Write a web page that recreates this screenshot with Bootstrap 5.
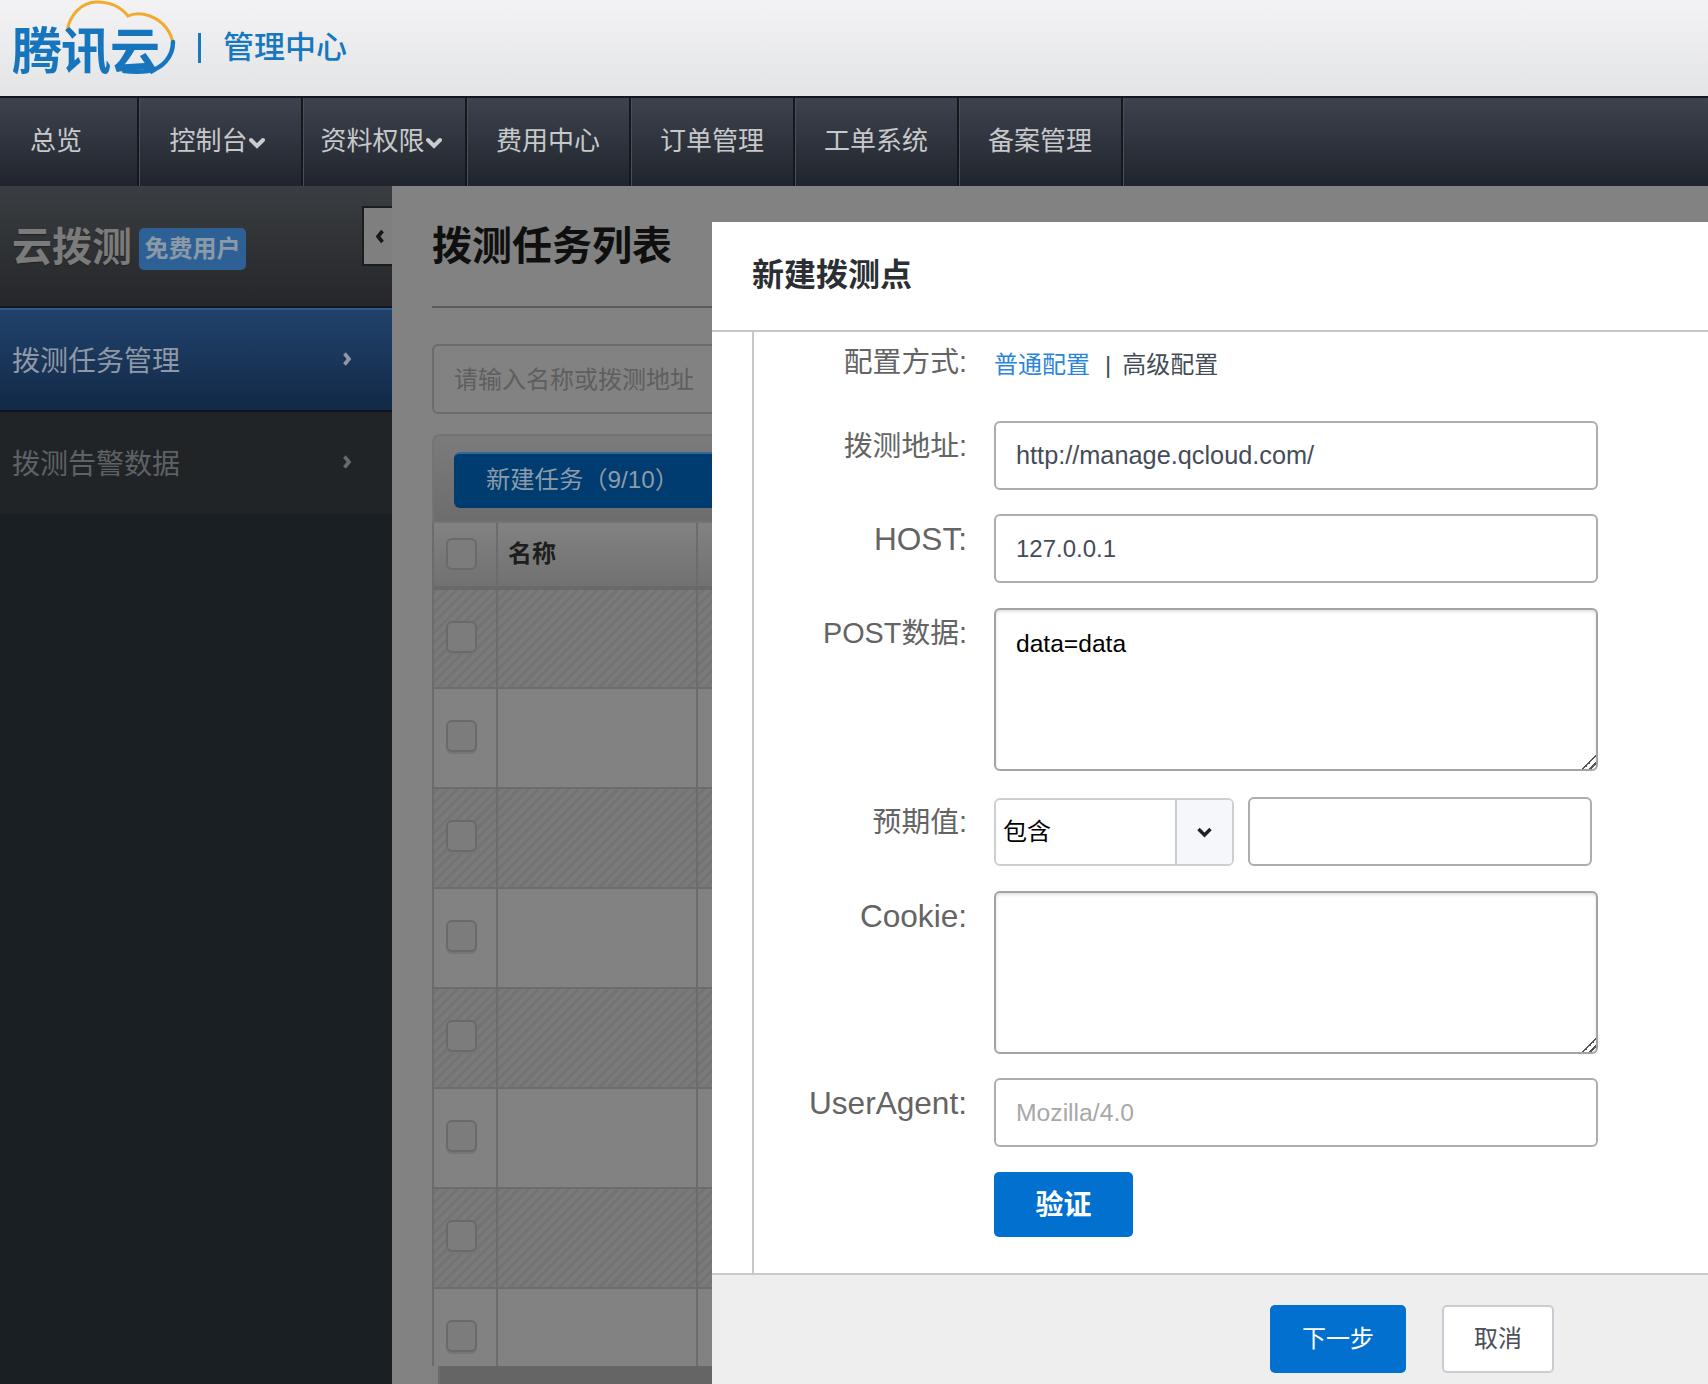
<!doctype html>
<html lang="zh-CN">
<head>
<meta charset="utf-8">
<title>云拨测</title>
<link rel="stylesheet" href="https://cdn.jsdelivr.net/npm/bootstrap@5.3.0/dist/css/bootstrap.min.css">
<style>
html,body{height:100%;overflow:hidden}
body{font-family:"Liberation Sans","Noto Sans CJK SC",sans-serif;background:#828282}
.shell{height:1384px}
.topbar{height:96px;background:linear-gradient(#f3f3f5,#e3e4e6);flex:none}
.brand-box{position:relative;width:180px;height:96px;flex:none}
.brand-box svg{position:absolute;left:0;top:0}
.brand-name{position:absolute;left:12px;top:22px;font-size:50px;line-height:60px;font-weight:700;color:#1675bc;letter-spacing:-1px;white-space:nowrap}
.brand-sep{width:3px;height:30px;background:#1a78bd;margin:0 22px 0 18px;flex:none}
.brand-sub{font-size:31px;line-height:90px;color:#1878bd;font-weight:500;white-space:nowrap}
.mainnav{height:90px;flex:none;background:linear-gradient(#3d434d,#20252d);border-top:2px solid #14171b;padding:0!important}
.mainnav .navbar-nav{height:100%}
.mainnav .nav-link{height:100%;width:164px;display:flex;align-items:center;justify-content:center;padding:0 0 2px;font-size:26px;color:#c6c8ca;border-right:2px solid #14171b;box-shadow:1px 0 0 #4a4f57;white-space:nowrap}
.mainnav .nav-item:first-child .nav-link{width:139px;justify-content:flex-start;padding-left:30px}
.nav-caret{margin:4px 6px 0 1px;flex:none}
.aside-pane{width:392px;flex:none;background:#1a1f23;position:relative}
.aside-head{height:122px;background:linear-gradient(#3a3d41,#25272a);border-bottom:2px solid #17191c;padding:0 0 0 12px}
.aside-title{font-size:40px;font-weight:700;color:#7b7b7b;text-shadow:0 1px 1px #222;line-height:50px;margin-top:2px}
.plan-tag{margin:6px 0 0 7px;width:107px;height:42px;border-radius:5px;background:#2d6195;color:#8c99a6;font-size:24px;font-weight:700;line-height:42px;text-align:center;white-space:nowrap}
.fold-tab{position:absolute;right:0;top:20px;width:30px;height:60px;background:#7f7f7f;border:2px solid #1b1e21;border-right:0;display:flex;align-items:center;justify-content:center;padding-left:3px}
.side-list{background:transparent}
.side-list .list-group-item{height:104px;border:0;border-radius:0;background:#212427;border-bottom:2px solid #1a1f23;color:#5e6165;font-size:28px;display:flex;align-items:center;justify-content:space-between;padding:4px 40px 0 12px}
.side-list .list-group-item svg{margin-top:-6px}
.side-list .list-group-item.active{background:linear-gradient(#21426c,#122947);color:#8e99a5;border-top:2px solid #2a5a8c;border-bottom:2px solid #10161c}
.work-pane{flex:1 1 auto;min-width:0;padding-left:40px;background:#828282}
.page-title{height:122px;flex:none;border-bottom:2px solid #5c5c5c;font-size:40px;font-weight:700;color:#0f0f0f;line-height:120px;white-space:nowrap}
.search-box{margin-top:36px;height:70px;flex:none;border:2px solid #6c6c6c;border-radius:6px;padding:0 20px;font-size:24px;line-height:68px;color:#5e5e5e;white-space:nowrap}
.tool-panel{margin-top:20px;height:89px;flex:none;background:linear-gradient(#7b7b7b,#6d6d6d);border:2px solid #747474;border-radius:8px 0 0 0;padding:16px 0 0 20px;border-right:0}
.new-task{width:300px;height:56px;border-radius:6px;background:#003c70;border:0;border-top:2px solid #2b6c98;color:#8c9ba8;font-size:24.300px;text-align:left;padding:0 0 2px 32px;white-space:nowrap}
.grid-wrap{flex:1 1 auto;min-height:0;overflow:hidden;border-left:2px solid #6c6c6c}
.grid-wrap .table{width:1400px;margin:0;table-layout:fixed;--bs-table-bg:transparent;border-collapse:collapse}
.grid-wrap th,.grid-wrap td{padding:0;border:0;border-right:2px solid #6c6c6c;border-bottom:2px solid #6c6c6c;background:transparent;box-shadow:none;vertical-align:middle}
.grid-wrap thead th{height:65px;background:linear-gradient(#828282,#717171);border-bottom:4px solid #696969;font-size:24px;color:#1d1d1d;font-weight:700;padding-left:10px;padding-bottom:2px}
.grid-wrap thead th:first-child{padding-left:0}
.grid-wrap tbody td{height:100px;padding-bottom:4px}
.zebra td{background:repeating-linear-gradient(-45deg,#7a7a7a 0 4px,#737373 4px 7px)!important}
.tick{display:block;width:31px;height:32px;margin:0 0 0 12px;border:2px solid #6a6a6a;border-radius:6px;background:#7c7c7c;box-shadow:0 2px 0 #767676}
.scroll-strip{height:18px;flex:none;background:#656565;margin-left:6px;border-left:2px solid #6c6c6c}
.dlg{position:absolute;left:712px;top:222px;width:996px;bottom:0;z-index:10;border:0;border-radius:0;background:#fff}
.dlg .modal-header{height:110px;flex:none;border:0;border-bottom:2px solid #c6c6c6;border-radius:0;padding:0 0 2px 40px}
.dlg .modal-title{font-size:32px;font-weight:700;color:#2b2f33;line-height:1}
.dlg .modal-body{padding:0 0 0 40px;flex:1 1 auto;min-height:0}
.form-col{height:100%;border-left:2px solid #c8c8c8;padding-top:5px}
.fld{display:flex;margin-bottom:25px}
.fld-first{margin-bottom:28px}
.fld-tight{margin-bottom:24px}
.fld-wide{margin-bottom:26px}
.fld-label{width:213px;flex:none;padding:0;margin:0 27px 0 0;text-align:right;font-size:28.800px;line-height:50px;color:#646464;white-space:nowrap}
.fld-label.latin{font-size:31.600px}
.cfg-links{font-size:24px;line-height:56px;color:#444c56;white-space:nowrap}
.cfg-links a{color:#2b85d8;text-decoration:none}
.cfg-links i{font-style:normal;margin:0 11px 0 15px}
.dlg .form-control{width:604px;height:69px;border:2px solid #adadad;border-radius:6px;padding:0 20px;font-size:24.600px;color:#454c59;box-shadow:none;background:#fff}
.dlg .form-control.url-txt{font-size:25.300px}
.dlg .form-control.num-txt{font-size:24px}
.dlg .form-control::placeholder{color:#a8a8a8;font-size:24.700px}
.dlg textarea.form-control{height:163px;padding:17px 20px;color:#000;line-height:34px;resize:both;border-color:#a3a3a3;box-shadow:inset 0 2px 3px #e2e2e2}
.dlg textarea.form-control::-webkit-resizer{background:linear-gradient(135deg,transparent 52%,#555 52% 60%,transparent 60% 76%,#555 76% 84%,transparent 84%)}
.dlg .form-control.short{width:344px;margin-left:14px}
.pick{width:240px;height:68px;margin-top:1px;border:2px solid #cdcfd3;border-radius:6px;font-size:24px;color:#000;overflow:hidden;flex:none}
.pick-val{flex:1 1 auto;padding-left:7px;display:flex;align-items:center;border-right:2px solid #c8ccd4}
.pick-arrow{width:55px;flex:none;background:#f6f7fa;display:flex;align-items:center;justify-content:center}
.verify{width:139px;height:65px;background:#0270cf;border:0;border-radius:5px;color:#fff;font-size:28px;font-weight:700;padding:2px 0 0}
.dlg .modal-footer{height:111px;flex:none;background:#eeeeef;border:0;border-top:2px solid #c9c9c9;border-radius:0;padding:30px 154px 0 0;align-items:flex-start;justify-content:flex-end;gap:36px}
.dlg .modal-footer>*{margin:0}
.go-next{width:136px;height:68px;background:#0270cf;border:0;border-radius:5px;color:#fff;font-size:24px;padding:0}
.go-cancel{width:112px;height:68px;background:#fff;border:2px solid #c9ccd2;border-radius:5px;color:#4a4f57;font-size:24px;padding:0}
</style>
</head>
<body>
<div class="shell d-flex flex-column position-relative">
  <header class="topbar d-flex align-items-center">
    <div class="brand-box">
      <svg width="180" height="96" viewBox="0 0 180 96" aria-hidden="true">
        <path d="M67 31C70 14 82 2 97 2c13 0 24 5 31 14 6-3 14-3 22 0 13 5 22 16 23 29" fill="none" stroke="#f0ab30" stroke-width="3"/>
        <path d="M173 42c0 15-11 27-25 29-7 1-15 1-24 0" fill="none" stroke="#1677bf" stroke-width="4.500" stroke-linecap="round"/>
      </svg>
      <span class="brand-name">腾讯云</span>
    </div>
    <span class="brand-sep"></span>
    <span class="brand-sub">管理中心</span>
  </header>

  <nav class="navbar mainnav align-items-stretch justify-content-start">
    <ul class="navbar-nav flex-row">
      <li class="nav-item"><a class="nav-link" href="#">总览</a></li>
      <li class="nav-item"><a class="nav-link" href="#">控制台<svg class="nav-caret" width="16" height="12" viewBox="0 0 16 12"><path d="M2 3l6 6 6-6" fill="none" stroke="#c9cbcd" stroke-width="4" stroke-linecap="round"/></svg></a></li>
      <li class="nav-item"><a class="nav-link" href="#">资料权限<svg class="nav-caret" width="16" height="12" viewBox="0 0 16 12"><path d="M2 3l6 6 6-6" fill="none" stroke="#c9cbcd" stroke-width="4" stroke-linecap="round"/></svg></a></li>
      <li class="nav-item"><a class="nav-link" href="#">费用中心</a></li>
      <li class="nav-item"><a class="nav-link" href="#">订单管理</a></li>
      <li class="nav-item"><a class="nav-link" href="#">工单系统</a></li>
      <li class="nav-item"><a class="nav-link" href="#">备案管理</a></li>
    </ul>
  </nav>

  <div class="d-flex flex-grow-1" style="min-height:0">
    <aside class="aside-pane">
      <div class="aside-head d-flex align-items-center">
        <span class="aside-title">云拨测</span>
        <span class="plan-tag">免费用户</span>
      </div>
      <div class="fold-tab"><svg width="10" height="15" viewBox="0 0 10 15"><path d="M7.500 2 3 7.500l4.500 5.500" fill="none" stroke="#15181b" stroke-width="3.600"/></svg></div>
      <div class="list-group side-list">
        <a class="list-group-item active" href="#">拨测任务管理<svg width="10" height="16" viewBox="0 0 10 16"><path d="M2.500 2.500 7 8l-4.500 5.500" fill="none" stroke="#8e99a5" stroke-width="3.600"/></svg></a>
        <a class="list-group-item" href="#">拨测告警数据<svg width="10" height="16" viewBox="0 0 10 16"><path d="M2.500 2.500 7 8l-4.500 5.500" fill="none" stroke="#666a6e" stroke-width="3.600"/></svg></a>
      </div>
    </aside>

    <main class="work-pane d-flex flex-column">
      <div class="page-title">拨测任务列表</div>
      <div class="search-box">请输入名称或拨测地址</div>
      <div class="tool-panel"><button class="btn new-task" type="button">新建任务（9/10）</button></div>
      <div class="grid-wrap">
        <table class="table">
          <colgroup><col style="width:63px"><col style="width:200px"><col></colgroup>
          <thead><tr><th><span class="tick"></span></th><th>名称</th><th></th></tr></thead>
          <tbody>
            <tr class="zebra"><td><span class="tick"></span></td><td></td><td></td></tr>
            <tr><td><span class="tick"></span></td><td></td><td></td></tr>
            <tr class="zebra"><td><span class="tick"></span></td><td></td><td></td></tr>
            <tr><td><span class="tick"></span></td><td></td><td></td></tr>
            <tr class="zebra"><td><span class="tick"></span></td><td></td><td></td></tr>
            <tr><td><span class="tick"></span></td><td></td><td></td></tr>
            <tr class="zebra"><td><span class="tick"></span></td><td></td><td></td></tr>
            <tr><td><span class="tick"></span></td><td></td><td></td></tr>
          </tbody>
        </table>
      </div>
      <div class="scroll-strip"></div>
    </main>
  </div>

  <section class="modal-content dlg">
    <div class="modal-header"><h5 class="modal-title">新建拨测点</h5></div>
    <div class="modal-body">
      <form class="form-col">
        <div class="fld fld-first">
          <label class="fld-label">配置方式:</label>
          <div class="cfg-links"><a href="#">普通配置</a><i>|</i><span>高级配置</span></div>
        </div>
        <div class="fld fld-tight"><label class="fld-label">拨测地址:</label><input class="form-control url-txt" value="http://manage.qcloud.com/"></div>
        <div class="fld"><label class="fld-label latin">HOST:</label><input class="form-control num-txt" value="127.0.0.1"></div>
        <div class="fld fld-wide"><label class="fld-label">POST数据:</label><textarea class="form-control">data=data</textarea></div>
        <div class="fld">
          <label class="fld-label">预期值:</label>
          <div class="pick d-flex">
            <span class="pick-val">包含</span>
            <span class="pick-arrow"><svg width="17" height="12" viewBox="0 0 17 12"><path d="M2.500 3l6 6 6-6" fill="none" stroke="#1e2226" stroke-width="3.400"/></svg></span>
          </div>
          <input class="form-control short">
        </div>
        <div class="fld fld-tight"><label class="fld-label latin">Cookie:</label><textarea class="form-control"></textarea></div>
        <div class="fld"><label class="fld-label latin">UserAgent:</label><input class="form-control" placeholder="Mozilla/4.0"></div>
        <div class="fld mb-0"><span class="fld-label"></span><button class="btn verify" type="button">验证</button></div>
      </form>
    </div>
    <div class="modal-footer">
      <button class="btn go-next" type="button">下一步</button>
      <button class="btn go-cancel" type="button">取消</button>
    </div>
  </section>
</div>
<script src="https://cdn.jsdelivr.net/npm/bootstrap@5.3.0/dist/js/bootstrap.bundle.min.js"></script>
</body>
</html>
